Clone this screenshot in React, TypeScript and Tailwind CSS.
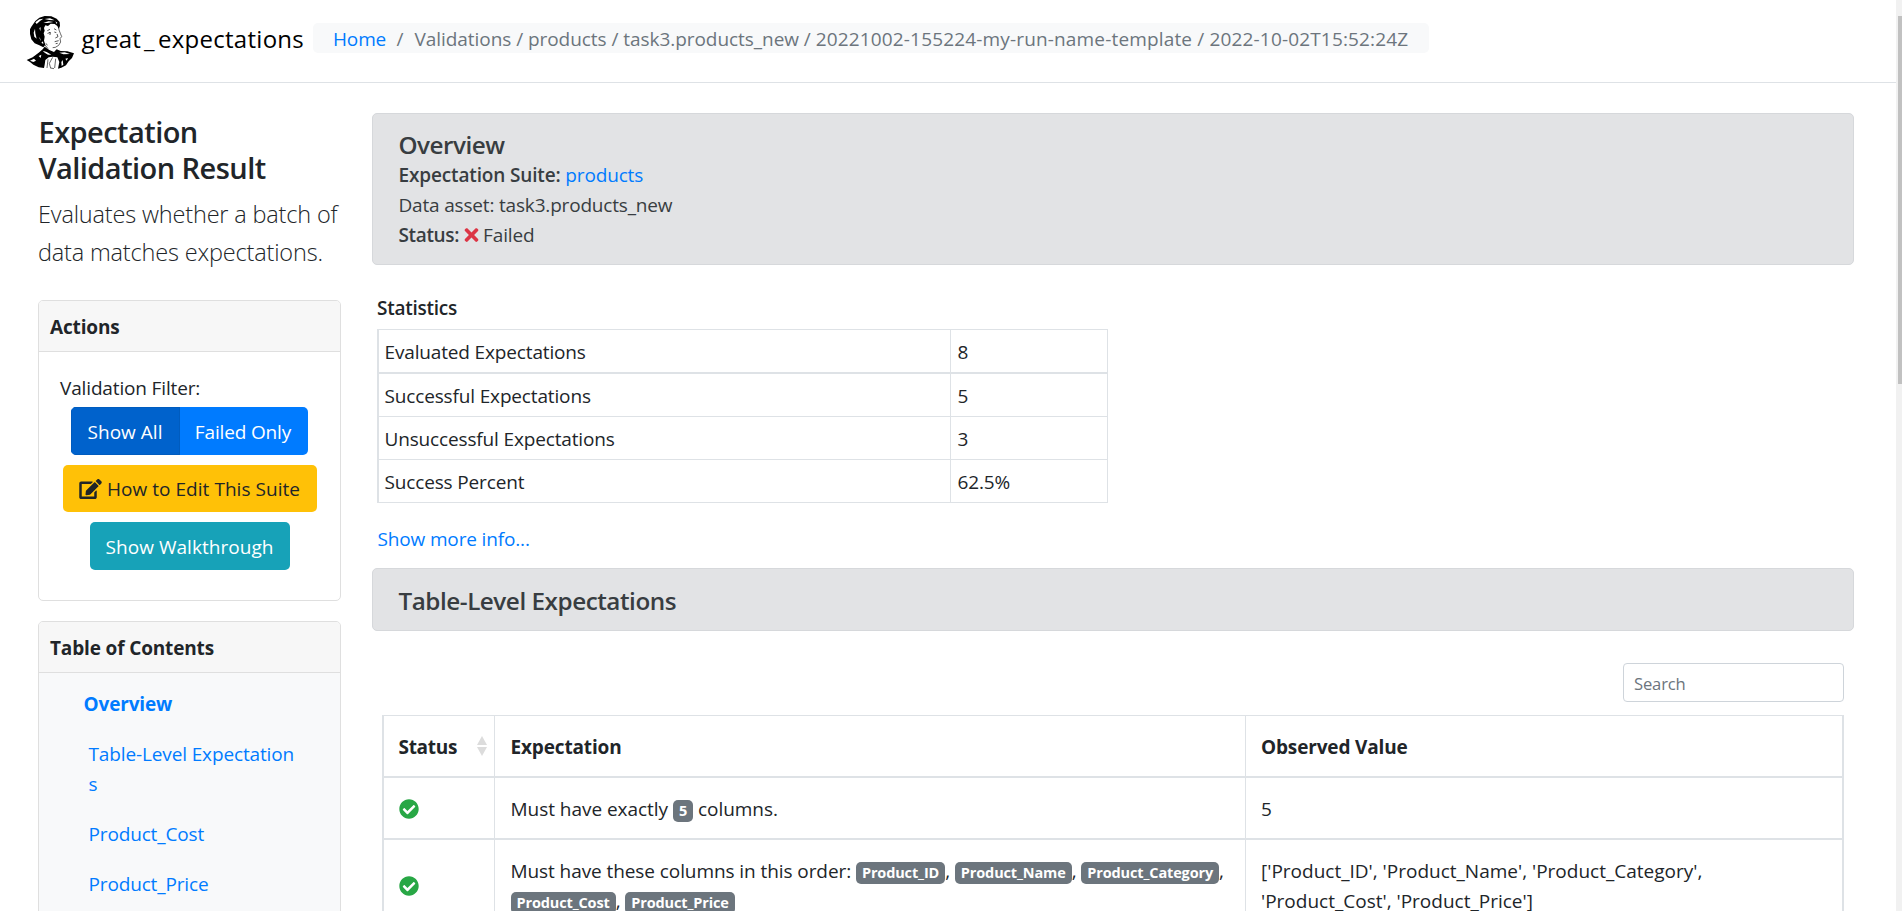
import React from "react";
import { FaCheckCircle, FaEdit, FaTimes } from "react-icons/fa";

function Portrait() {
  return (
    <svg viewBox="0 0 162 180" className="h-[60px] w-[54px] shrink-0" aria-hidden="true">
      <path
        d="M22 44 L34 27 L46 17 L62 12 L82 13 L98 20 L107 30 L108 42 L104 50 L100 42 L92 36 L80 35 L72 42 L64 40 L60 48 L62 56 L59 64 L62 74 L60 86 L64 98 L58 106 L46 100 L32 94 L22 82 L18 66 L18 52 Z"
        fill="#000"
      />
      <path d="M34 31 L46 22 L58 20 L48 27 L38 36 Z M62 21 L78 19 L92 25 L76 24 Z M58 32 L74 28 L88 30 L70 33 Z M94 28 L100 32 L98 36 Z" fill="#fff" />
      <path d="M29 62 L33 50 L34 64 L38 80 L31 74 Z M46 48 L50 46 L49 58 Z M44 74 L49 80 L51 88 Z M52 92 L57 88 L58 96 Z" fill="#fff" />
      <path
        d="M104 44 L105 54 L109 64 L113 74 L108 80 L110 90 L104 100 L94 106 L86 107"
        fill="none"
        stroke="#000"
        strokeWidth="1.8"
      />
      <path
        d="M70 56 L78 52 M71 66 L75 61 L81 63 M78 62 L78 69 M90 50 L97 54 M91 60 L97 62 M99 66 L102 74 L94 78 M92 89 L104 86 M95 95 L101 94 M62 98 L72 110 M66 94 L70 100"
        fill="none"
        stroke="#000"
        strokeWidth="2"
      />
      <path
        d="M8 144 L26 136 L44 122 L56 112 L62 104 L76 114 L90 120 L98 112 L110 117 L130 118 L150 124 L144 138 L134 148 L126 160 L112 167 L102 170 L106 150 L100 136 L86 134 L74 136 L64 144 L62 158 L60 168 L44 166 L28 158 L18 150 Z"
        fill="#000"
      />
      <path d="M56 116 L68 120 L82 128 L72 128 L62 122 Z M106 122 L122 121 L138 126 L118 127 Z M18 146 L30 140 L36 146 L28 150 Z M112 150 L116 144 L118 158 L113 162 Z M44 132 L52 128 L50 138 Z M124 140 L132 138 L128 146 Z" fill="#fff" />
      <path d="M72 142 L69 168 M86 136 L76 154 L80 169 M95 140 L92 168 M80 168 L90 170" fill="none" stroke="#000" strokeWidth="1.8" />
    </svg>
  );
}

function Badge({ children }: { children: React.ReactNode }) {
  return (
    <span className="inline-block rounded-[5px] bg-[#6c757d] px-[6px] pt-[3px] pb-[4px] align-[0px] text-[14.5px] leading-[15px] font-bold tracking-[-0.14px] text-white">
      {children}
    </span>
  );
}

const stats: [string, string, string][] = [
  ["Evaluated Expectations", "8", "h-[44px] border-b-2"],
  ["Successful Expectations", "5", "h-[43px] border-b"],
  ["Unsuccessful Expectations", "3", "h-[43px] border-b"],
  ["Success Percent", "62.5%", "h-[43px] border-b"],
];

function Status() {
  return <FaCheckCircle className="size-[20px] text-[#28a745]" />;
}

export default function App() {
  return (
    <div className="flex h-[911px] w-[1902px] overflow-hidden bg-white font-['Open_Sans','Noto_Sans',sans-serif] text-[19px] leading-[30px] tracking-[-0.15px] text-[#212529]">
      <div className="flex h-full w-[1896px] flex-col overflow-hidden">
        <header className="flex h-[83px] shrink-0 items-start border-b border-[#dee2e6] pl-6">
          <div className="mt-3">
            <Portrait />
          </div>
          <div className="mt-[24px] ml-[3.5px] w-[231.5px] text-[24px] tracking-[0.28px] whitespace-nowrap text-black">
            great<span className="mx-[3px]">_</span>expectations
          </div>
          <nav className="mt-[23px] flex h-[30px] w-[1116px] rounded-[5px] bg-[#f8f9fa] pt-px pl-5 whitespace-pre text-[#6c757d]">
            <a className="text-[#007bff]">Home</a>
            <span className="ml-[10.5px]">/</span>
            <span className="ml-[11px]">
              <span className="tracking-[-0.05px]">Validations / products / task3.products_new / </span>
              <span className="tracking-[0.16px]">20221002-155224-my-run-name-template / 2022-10-02T15:52:24Z</span>
            </span>
          </nav>
        </header>

        <div className="flex flex-1 overflow-hidden">
          <aside className="ml-[38px] w-[303px] shrink-0">
            <h4 className="mt-[31px] pl-[0.5px] text-[29px] leading-[36px] font-semibold tracking-[-0.55px]">
              Expectation
              <br />
              Validation Result
            </h4>
            <p className="mt-[10px] text-[23.5px] leading-[37.5px] font-light tracking-[-0.17px] whitespace-nowrap">
              Evaluates whether a batch of
              <br />
              data matches expectations.
            </p>

            <section className="mt-[29px] h-[301px] overflow-hidden rounded-[5px] border border-[#dfdfdf]">
              <div className="h-[51px] border-b border-[#dfdfdf] bg-[#f7f7f7] pt-[11px] pl-[11px] font-bold">Actions</div>
              <div className="flex flex-col items-center pt-[21px]">
                <p className="w-full pl-[21px]">Validation Filter:</p>
                <div className="mt-[4px] mr-px flex h-12 w-[237px] overflow-hidden rounded-[5px] text-white">
                  <button className="w-[109px] border border-[#005cbf] bg-[#0062cc] pt-px tracking-[0.02px]">Show All</button>
                  <button className="flex-1 bg-[#007bff] pt-px pr-px">Failed Only</button>
                </div>
                <button className="mt-[10px] flex h-[47px] w-[254px] items-center rounded-[5px] bg-[#ffc107] pl-4 tracking-[0.04px] whitespace-nowrap text-[#212529]">
                  <FaEdit className="mr-[5.5px] h-[20px] w-[23px]" />
                  How to Edit This Suite
                </button>
                <button className="mt-[10px] h-12 w-[200px] rounded-[5px] bg-[#17a2b8] pt-px tracking-[0.04px] text-white">
                  Show Walkthrough
                </button>
              </div>
            </section>

            <section className="mt-5 h-[320px] overflow-hidden rounded-[5px] border border-[#dfdfdf] bg-[#f8f9fa]">
              <div className="h-[51px] border-b border-[#dfdfdf] bg-[#f7f7f7] pt-[11px] pl-[11px] font-bold">Table of Contents</div>
              <nav className="flex flex-col pt-[16px] pl-[49.5px] text-[#007bff]">
                <a className="-ml-[5px] font-bold">Overview</a>
                <a className="mt-5 w-[207px] tracking-[-0.13px] break-all whitespace-normal">Table-Level Expectations</a>
                <a className="mt-5">Product_Cost</a>
                <a className="mt-5">Product_Price</a>
              </nav>
            </section>
          </aside>

          <main className="mt-[30px] ml-[31px] w-[1482px] shrink-0">
            <section className="h-[152px] rounded-[5px] border border-[#d6d8db] bg-[#e2e3e5] pt-[16px] pl-[25.5px] text-[#383d41]">
              <h5 className="text-[24.25px] leading-[30px] font-semibold tracking-[-0.5px]">Overview</h5>
              <p>
                <strong className="font-semibold">Expectation Suite:</strong> <a className="text-[#007bff]">products</a>
              </p>
              <p className="tracking-[-0.18px]">Data asset: task3.products_new</p>
              <p className="flex items-center">
                <strong className="font-semibold tracking-[-0.35px]">Status:</strong>
                <FaTimes className="mr-[4.5px] ml-[4.5px] h-[20px] w-[15px]" color="#dc3545" />
                Failed
              </p>
            </section>

            <section className="mt-[28px] h-[275px] pl-[5px]">
              <h6 className="text-[19px] font-semibold tracking-[-0.25px]">Statistics</h6>
              <div className="mt-[6px] w-[731px] border-t border-r border-l-2 border-[#dee2e6]">
                {stats.map(([label, value, row]) => (
                  <div key={label} className={`flex items-center border-[#dee2e6] ${row}`}>
                    <span className="flex h-full w-[572px] items-center border-r border-[#dee2e6] pt-px pl-[5.5px]">{label}</span>
                    <span className="pt-px pl-[6.5px]">{value}</span>
                  </div>
                ))}
              </div>
              <a className="mt-[21px] block pl-[0.5px] text-[#007bff]">Show more info...</a>
            </section>

            <section className="flex h-[63px] items-center rounded-[5px] border border-[#d6d8db] bg-[#e2e3e5] pt-[3px] pl-[25.5px]">
              <h5 className="text-[24.25px] leading-[30px] font-semibold tracking-[-0.46px] text-[#383d41]">Table-Level Expectations</h5>
            </section>

            <div className="mt-8 mr-[10px] flex h-[39px] justify-end">
              <input
                placeholder="Search"
                className="h-[39px] w-[221px] rounded-[4px] border border-[#ced4da] px-[10px] pt-[2px] text-[16.6px] tracking-[-0.15px] placeholder:text-[#6c757d]"
              />
            </div>

            <div className="mt-[13px] ml-[10px] w-[1462px] border-x-2 border-t border-[#dee2e6]">
              <div className="flex h-[62px] border-b-2 border-[#dee2e6] font-bold">
                <div className="flex w-[111px] items-center border-r border-[#dee2e6] pt-[2px] pl-[14.5px] tracking-[-0.3px]">
                  Status
                  <svg viewBox="0 0 10 20" className="-mt-[3px] ml-[20px] h-5 w-[10px] fill-[#dcdcdc]">
                    <path d="M5 0 L10 9 H0 Z M0 11 H10 L5 20 Z" />
                  </svg>
                </div>
                <div className="flex w-[751px] items-center border-r border-[#dee2e6] pt-[2px] pl-[15.5px]">Expectation</div>
                <div className="flex items-center pt-[2px] pl-[15px]">Observed Value</div>
              </div>
              <div className="flex h-[62px] border-b-2 border-[#dee2e6]">
                <div className="w-[111px] border-r border-[#dee2e6] pt-[21px] pl-[14.5px]">
                  <Status />
                </div>
                <div className="w-[751px] border-r border-[#dee2e6] pt-[16px] pl-[15.5px] tracking-[-0.04px]">
                  Must have exactly <Badge>5</Badge> columns.
                </div>
                <div className="pt-[16px] pl-[15px]">5</div>
              </div>
              <div className="flex h-[92px] border-b-2 border-[#dee2e6]">
                <div className="w-[111px] border-r border-[#dee2e6] pt-[36px] pl-[14.5px]">
                  <Status />
                </div>
                <div className="w-[751px] border-r border-[#dee2e6] pt-[16px] pl-[15.5px] tracking-[-0.08px] whitespace-nowrap">
                  <div className="h-[30px]">
                    Must have these columns in this order: <Badge>Product_ID</Badge>, <Badge>Product_Name</Badge>,{" "}
                    <Badge>Product_Category</Badge>,
                  </div>
                  <div className="h-[30px]">
                    <Badge>Product_Cost</Badge>, <Badge>Product_Price</Badge>
                  </div>
                </div>
                <div className="pt-[16px] pl-[15px] tracking-[0px]">
                  ['Product_ID', 'Product_Name', 'Product_Category',
                  <br />
                  'Product_Cost', 'Product_Price']
                </div>
              </div>
            </div>
          </main>
        </div>
      </div>
      <div className="h-full w-[6px] bg-[#f1f1f1] pt-4 pl-[2px]">
        <div className="h-[368px] w-1 bg-[#c1c1c1]" />
      </div>
    </div>
  );
}
